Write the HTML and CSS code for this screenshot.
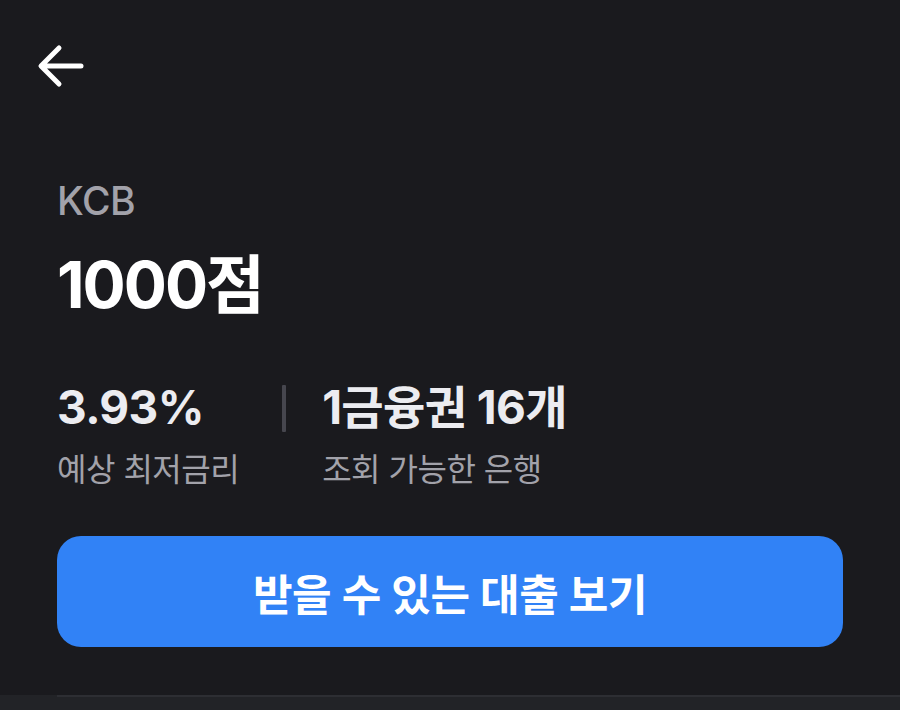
FILE: index.html
```html
<!DOCTYPE html>
<html lang="ko">
<head>
<meta charset="utf-8">
<link rel="stylesheet" href="styles.css">
</head>
<body>
<div class="screen">
  <header class="topbar">
    <svg class="back" width="48" height="44" viewBox="0 0 48 44" fill="none">
      <path d="M44 22H5M22 4L4 22L22 40" stroke="#ffffff" stroke-width="5" stroke-linecap="round" stroke-linejoin="round"/>
    </svg>
  </header>
  <main class="content">
    <div class="agency">KCB</div>
    <div class="score">1000점</div>
    <div class="stats">
      <div class="stat">
        <div class="stat-value">3.93%</div>
        <div class="stat-label">예상 최저금리</div>
      </div>
      <div class="divider"></div>
      <div class="stat">
        <div class="stat-value">1금융권 16개</div>
        <div class="stat-label">조회 가능한 은행</div>
      </div>
    </div>
    <button class="cta">받을 수 있는 대출 보기</button>
  </main>
  <div class="bottom"><div class="bottom-line"></div></div>
</div>
</body>
</html>
```
FILE: styles.css
```css
html, body {
  margin: 0;
  padding: 0;
  background: #1a1a1e;
}
.screen {
  width: 900px;
  height: 710px;
  display: flex;
  flex-direction: column;
  font-family: Inter, "Noto Sans CJK KR", sans-serif;
  overflow: hidden;
}
.topbar {
  height: 130px;
  padding: 44px 0 0 37px;
  box-sizing: border-box;
}
.back {
  display: block;
}
.content {
  padding: 0 57px;
  display: flex;
  flex-direction: column;
  flex: 1;
}
.agency {
  margin-top: 47px;
  font-size: 39px;
  line-height: 48px;
  color: #a2a2aa;
  font-weight: 500;
  letter-spacing: -0.5px;
}
.score {
  margin-top: 22px;
  font-size: 64px;
  line-height: 76px;
  font-weight: 700;
  color: #ffffff;
  letter-spacing: -2px;
}
.stats {
  display: flex;
  align-items: flex-start;
  margin-top: 57px;
}
.stat-value {
  font-size: 46px;
  line-height: 54px;
  font-weight: 700;
  color: #ececf0;
  letter-spacing: -0.6px;
}
.stat-value.wide {
  letter-spacing: 0;
}
.stat-label {
  margin-top: 16px;
  font-size: 32px;
  line-height: 40px;
  color: #a2a2aa;
  letter-spacing: -0.5px;
}
.divider {
  width: 4px;
  height: 47px;
  background: #46464e;
  margin: 5px 36px 0 43px;
  border-radius: 1px;
}
.cta {
  margin-top: 46px;
  height: 111px;
  border: none;
  border-radius: 24px;
  background: #3182f6;
  color: #ffffff;
  font-family: Inter, "Noto Sans CJK KR", sans-serif;
  font-size: 43px;
  font-weight: 600;
  letter-spacing: -0.4px;
  padding: 0;
}
.bottom {
  height: 15px;
  background: #222327;
}
.bottom-line {
  margin-left: 57px;
  height: 2px;
  background: #2d2e33;
}
```
